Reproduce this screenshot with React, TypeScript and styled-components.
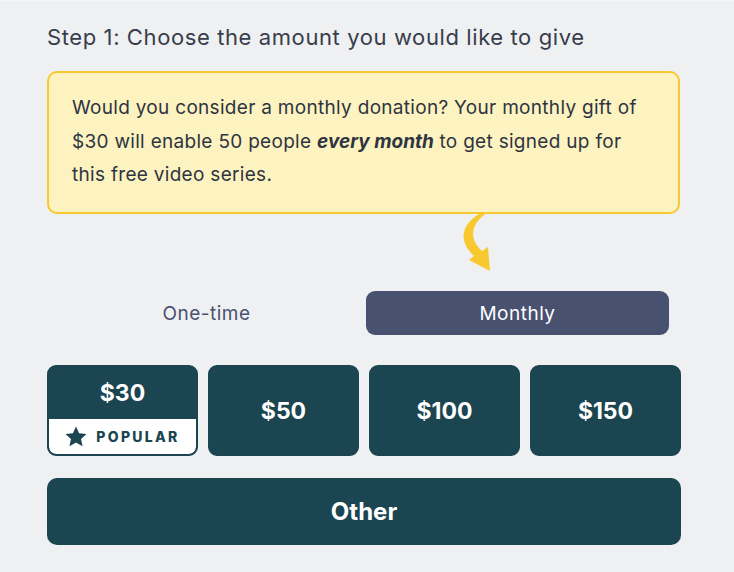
import styled, {createGlobalStyle} from "styled-components";
import {useState} from "react";

const GlobalStyle = createGlobalStyle`
  body {
    margin: 0;
    background: #eef0f2;
    font-family: "Inter", "Noto Sans", sans-serif;
  }
`;

const Page = styled.div`
  width: 734px;
  height: 572px;
  box-sizing: border-box;
  padding: 22px 53px 0 47px;
  border-top: 1px solid #f5f6f7;
`;

const Title = styled.h2`
  margin: 0 0 20px;
  font-size: 22px;
  line-height: 28px;
  font-weight: 400;
  letter-spacing: 0.6px;
  color: #383d4b;
`;

const Notice = styled.div`
  box-sizing: border-box;
  width: 633px;
  height: 143px;
  padding: 18px 24px 0 23px;
  background: #fcf3c0;
  border: 2px solid #f8c92f;
  border-radius: 10px;
  font-size: 19px;
  line-height: 33.5px;
  letter-spacing: 0.3px;
  color: #2f3441;
`;

const Emphasis = styled.em`
  font-weight: 700;
  letter-spacing: 0;
`;

const ArrowWrap = styled.div`
  height: 77px;
  padding-left: 410px;
`;

const Toggle = styled.div`
  display: grid;
  grid-template-columns: 1fr 1fr;
  gap: 8px;
  margin: 0 12px 0 8px;
`;

const ToggleButton = styled.button<{ $active: boolean }>`
  height: 44px;
  border: 0;
  border-radius: 9px;
  font-family: inherit;
  font-size: 19px;
  letter-spacing: 0.5px;
  cursor: pointer;
  background: ${p => (p.$active ? "#485270" : "transparent")};
  color: ${p => (p.$active ? "#ffffff" : "#4a5270")};
`;

const Amounts = styled.div`
  display: grid;
  grid-template-columns: repeat(4, 1fr);
  gap: 10px;
  margin-top: 30px;
`;

const AmountButton = styled.button`
  box-sizing: border-box;
  height: 91px;
  display: flex;
  flex-direction: column;
  border: 2px solid #1b4550;
  border-radius: 9px;
  padding: 0;
  overflow: hidden;
  background: #1b4550;
  color: #ffffff;
  font-family: inherit;
  cursor: pointer;
`;

const AmountValue = styled.span`
  flex: 1;
  display: flex;
  align-items: center;
  justify-content: center;
  font-size: 23px;
  font-weight: 700;
`;

const Badge = styled.span`
  height: 35px;
  display: flex;
  align-items: center;
  justify-content: center;
  gap: 9px;
  background: #ffffff;
  border-radius: 0 0 7px 7px;
  color: #1b4550;
  font-size: 14px;
  font-weight: 800;
  letter-spacing: 2.3px;
`;

const OtherButton = styled.button`
  width: 100%;
  height: 67px;
  margin-top: 22px;
  border: 0;
  border-radius: 10px;
  background: #1b4550;
  color: #ffffff;
  font-family: inherit;
  font-size: 24px;
  font-weight: 700;
  cursor: pointer;
`;

const amounts = [30, 50, 100, 150];

export default function App() {
  const [frequency, setFrequency] = useState("monthly");

  return (
    <>
      <GlobalStyle />
      <Page>
        <Title>Step 1: Choose the amount you would like to give</Title>
        <Notice>
          Would you consider a monthly donation? Your monthly gift of $30 will enable 50 people{" "}
          <Emphasis>every month</Emphasis> to get signed up for this free video series.
        </Notice>
        <ArrowWrap>
          <svg width="44" height="60" viewBox="0 0 44 60">
            <path
              d="M22 0 C 6 10, 1 24, 14 39 L 17 42 L 12 46 L 33 57 L 31 33 L 25 37 L 22 34 C 12 23, 15 10, 28 0 Z"
              fill="#f8c92f"
            />
          </svg>
        </ArrowWrap>
        <Toggle>
          <ToggleButton $active={frequency === "one-time"} onClick={() => setFrequency("one-time")}>
            One-time
          </ToggleButton>
          <ToggleButton $active={frequency === "monthly"} onClick={() => setFrequency("monthly")}>
            Monthly
          </ToggleButton>
        </Toggle>
        <Amounts>
          {amounts.map(a => (
            <AmountButton key={a}>
              <AmountValue>${a}</AmountValue>
              {a === 30 && (
                <Badge>
                  <svg width="22" height="21" viewBox="0 0 24 23">
                    <path d="M12 0.5l3.4 7.4 8.1 0.9-6 5.5 1.7 8-7.2-4.1-7.2 4.1 1.7-8-6-5.5 8.1-0.9z" fill="#1b4550" />
                  </svg>
                  POPULAR
                </Badge>
              )}
            </AmountButton>
          ))}
        </Amounts>
        <OtherButton>Other</OtherButton>
      </Page>
    </>
  );
}
